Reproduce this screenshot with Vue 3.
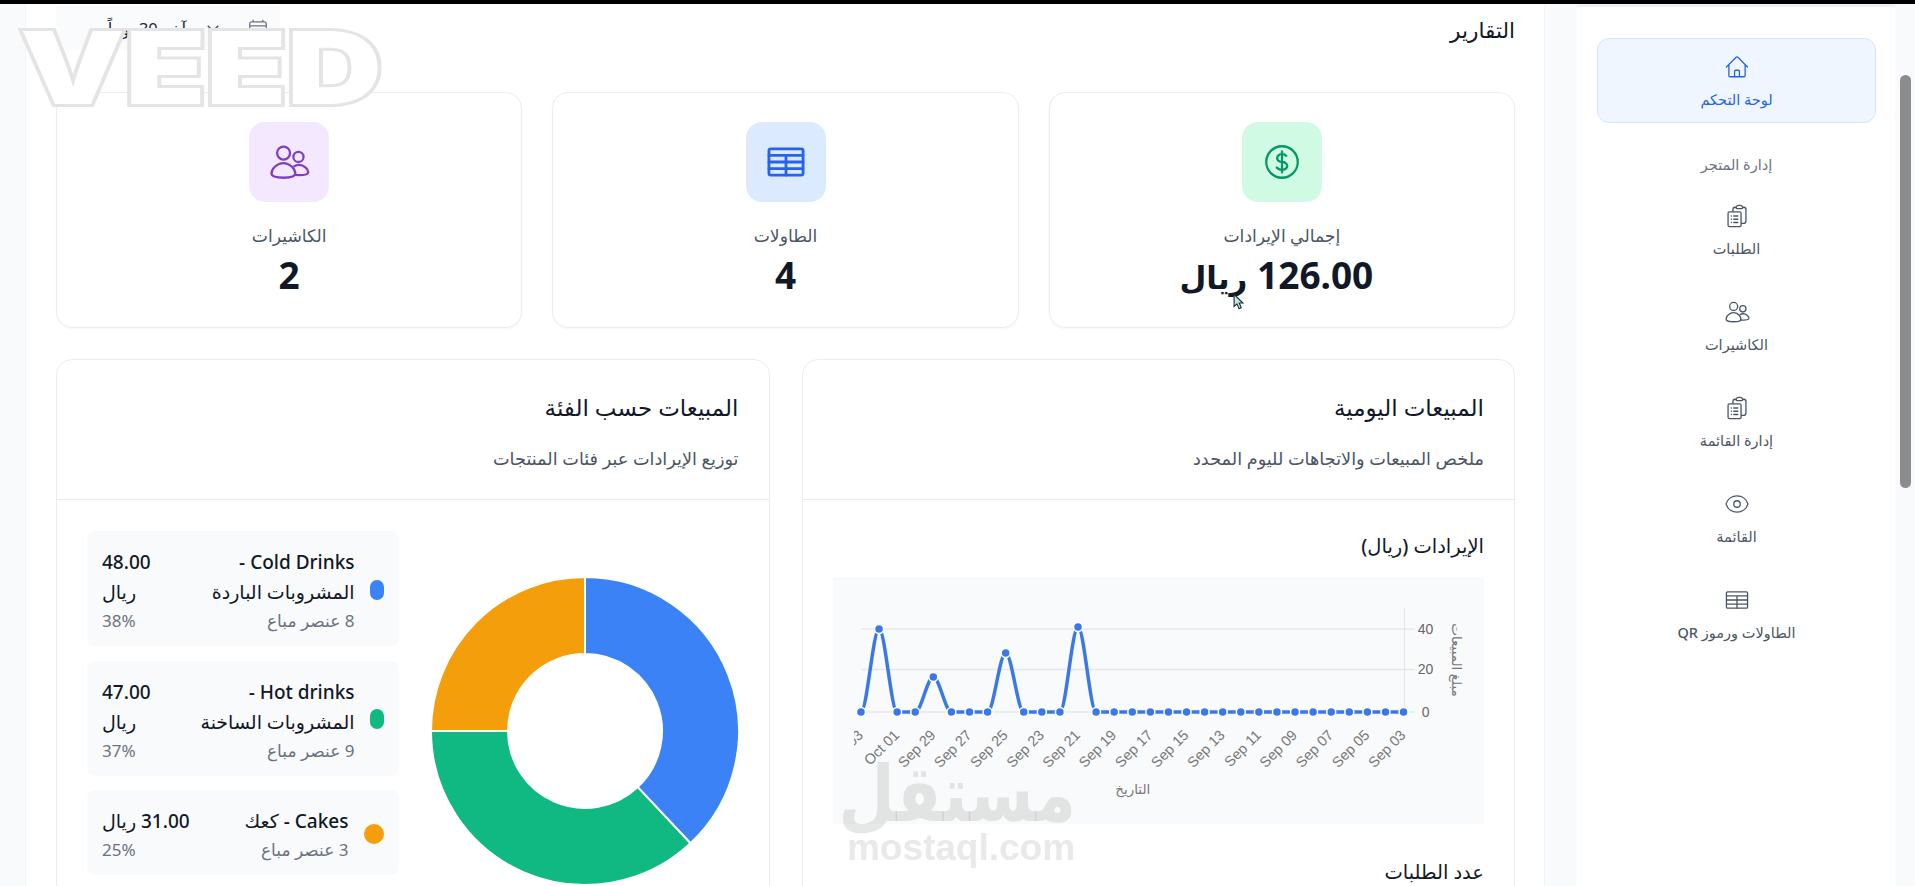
<script setup>
const stats = [
  { label: 'إجمالي الإيرادات', value: '126.00', unit: 'ريال', tone: 'green', icon: 'dollar' },
  { label: 'الطاولات', value: '4', tone: 'blue', icon: 'table' },
  { label: 'الكاشيرات', value: '2', tone: 'purple', icon: 'users' },
]

const navItems = [
  { label: 'الطلبات', icon: 'clip' },
  { label: 'الكاشيرات', icon: 'users' },
  { label: 'إدارة القائمة', icon: 'clip' },
  { label: 'القائمة', icon: 'eye' },
  { label: 'الطاولات ورموز QR', icon: 'table' },
]

const legend = [
  { name: 'Cold Drinks - المشروبات الباردة', sold: '8 عنصر مباع', value: '48.00 ريال', pct: '38%', color: '#3b82f6', narrow: true },
  { name: 'Hot drinks - المشروبات الساخنة', sold: '9 عنصر مباع', value: '47.00 ريال', pct: '37%', color: '#10b981', narrow: true },
  { name: 'Cakes - كعك', sold: '3 عنصر مباع', value: '31.00 ريال', pct: '25%', color: '#f59e0b', narrow: false },
]

// donut, clockwise from the top
const arc = (from, to) => {
  const R = 154, r = 77, c = 154
  const p = (rad, t) => {
    const a = t * Math.PI * 2
    return `${c + rad * Math.sin(a)} ${c - rad * Math.cos(a)}`
  }
  const big = to - from > 0.5 ? 1 : 0
  return `M${p(R, from)} A${R} ${R} 0 ${big} 1 ${p(R, to)} L${p(r, to)} A${r} ${r} 0 ${big} 0 ${p(r, from)} Z`
}
const slices = [
  { d: arc(0, 0.38), color: '#3b82f6' },
  { d: arc(0.38, 0.75), color: '#10b981' },
  { d: arc(0.75, 1), color: '#f59e0b' },
]

// revenue chart, in the coordinates of the grey box
const peaks = { 1: 52, 4: 100, 8: 76, 12: 50 }
const points = Array.from({ length: 31 }, (_, i) => ({ x: 28 + i * 18.1, y: peaks[i] ?? 135 }))
const linePath = points.reduce((d, p, i) => {
  if (i === 0) return `M${p.x} ${p.y}`
  const prev = points[i - 1]
  const k = (p.x - prev.x) / 3
  return `${d} C${prev.x + k} ${prev.y} ${p.x - k} ${p.y} ${p.x} ${p.y}`
}, '')
const dayLabels = ['Oct 03', 'Oct 01', 'Sep 29', 'Sep 27', 'Sep 25', 'Sep 23', 'Sep 21', 'Sep 19', 'Sep 17', 'Sep 15', 'Sep 13', 'Sep 11', 'Sep 09', 'Sep 07', 'Sep 05', 'Sep 03']
</script>

<template>
  <div class="page" dir="rtl">
    <div class="topbar"></div>
    <div class="shell">
      <aside class="sidebar">
        <div class="nav-item active">
          <svg class="nav-icon" viewBox="0 0 24 24"><path d="m2.25 12 8.954-8.955c.44-.439 1.152-.439 1.591 0L21.75 12M4.5 9.75v10.125c0 .621.504 1.125 1.125 1.125H9.75v-4.875c0-.621.504-1.125 1.125-1.125h2.25c.621 0 1.125.504 1.125 1.125V21h4.125c.621 0 1.125-.504 1.125-1.125V9.75M8.25 21h8.25"/></svg>
          <span>لوحة التحكم</span>
        </div>
        <div class="nav-group">إدارة المتجر</div>
        <div v-for="item in navItems" :key="item.label" class="nav-item">
          <svg class="nav-icon" viewBox="0 0 24 24">
            <template v-if="item.icon === 'clip'">
              <path d="M9 12h3.75M9 15h3.75M9 18h3.75m3 .75H18a2.25 2.25 0 0 0 2.25-2.25V6.108c0-1.135-.845-2.098-1.976-2.192a48.424 48.424 0 0 0-1.123-.08m-5.801 0c-.065.21-.1.433-.1.664 0 .414.336.75.75.75h4.5a.75.75 0 0 0 .75-.75 2.25 2.25 0 0 0-.1-.664m-5.8 0A2.251 2.251 0 0 1 13.5 2.25H15c1.012 0 1.867.668 2.15 1.586m-5.8 0c-.376.023-.75.05-1.124.08C9.095 4.01 8.25 4.973 8.25 6.108V8.25m0 0H4.875c-.621 0-1.125.504-1.125 1.125v11.25c0 .621.504 1.125 1.125 1.125h9.75c.621 0 1.125-.504 1.125-1.125V9.375c0-.621-.504-1.125-1.125-1.125H8.25ZM6.75 12h.008v.008H6.75V12Zm0 3h.008v.008H6.75V15Zm0 3h.008v.008H6.75V18Z"/>
            </template>
            <template v-else-if="item.icon === 'users'">
              <circle cx="8.900" cy="6.900" r="3.700"/><circle cx="17.400" cy="9.100" r="2.900"/>
              <path d="M8.800 12.600c3.600 0 6.800 3.300 6.800 6 0 1.600-3 2.400-6.800 2.400S2 20.200 2 18.600c0-2.700 3.200-6 6.800-6Z"/>
              <path d="M15 14.400c.8-.5 1.700-.8 2.700-.8 2.800 0 5.300 2.500 5.300 4.200 0 1.200-2.400 1.700-5.200 1.700-.9 0-1.700 0-2.400-.2"/>
            </template>
            <template v-else-if="item.icon === 'eye'">
              <path d="M2.036 12.322a1.012 1.012 0 0 1 0-.639C3.423 7.51 7.36 4.5 12 4.5c4.638 0 8.573 3.007 9.963 7.178.07.207.07.431 0 .639C20.577 16.49 16.64 19.5 12 19.5c-4.638 0-8.573-3.007-9.963-7.178Z"/>
              <path d="M15 12a3 3 0 1 1-6 0 3 3 0 0 1 6 0Z"/>
            </template>
            <template v-else>
              <rect x="2.250" y="4.500" width="19.500" height="15" rx="1.100"/>
              <path d="M2.250 8.250h19.500M2.250 12h19.500M2.250 15.750h19.500M12 8.250V19.500"/>
            </template>
          </svg>
          <span>{{ item.label }}</span>
        </div>
      </aside>

      <main class="main">
        <header class="main-head">
          <h1>التقارير</h1>
          <div class="range">
            <svg class="range-icon" viewBox="0 0 24 24"><path d="M6.750 3v2.250M17.250 3v2.250M3 18.750V7.500a2.250 2.250 0 0 1 2.250-2.250h13.500A2.250 2.250 0 0 1 21 7.500v11.250M3 18.750A2.250 2.250 0 0 0 5.250 21h13.500A2.250 2.250 0 0 0 21 18.750M3 9.750h18"/></svg>
            <svg class="range-chev" viewBox="0 0 24 24"><path d="m5 9 7 7 7-7"/></svg>
            <span>آخر 30 يوماً</span>
          </div>
        </header>

        <section class="stats">
          <div v-for="s in stats" :key="s.label" class="stat">
            <div class="stat-icon" :class="s.tone">
              <svg viewBox="0 0 24 24">
                <path v-if="s.icon === 'dollar'" d="M12 6v12m-3-2.818.879.659c1.171.879 3.07.879 4.242 0 1.172-.879 1.172-2.303 0-3.182C13.536 12.219 12.768 12 12 12c-.725 0-1.450-.22-2.003-.659-1.106-.879-1.106-2.303 0-3.182s2.900-.879 4.006 0l.415.330M21 12a9 9 0 1 1-18 0 9 9 0 0 1 18 0Z"/>
                <template v-else-if="s.icon === 'table'">
                  <rect x="2.250" y="4.500" width="19.500" height="15" rx="1.100"/>
                  <path d="M2.250 8.250h19.500M2.250 12h19.500M2.250 15.750h19.500M12 8.250V19.500"/>
                </template>
                <template v-else>
                  <circle cx="8.900" cy="6.900" r="3.700"/><circle cx="17.400" cy="9.100" r="2.900"/>
                  <path d="M8.800 12.600c3.600 0 6.800 3.300 6.800 6 0 1.600-3 2.400-6.800 2.400S2 20.200 2 18.600c0-2.700 3.200-6 6.800-6Z"/>
                  <path d="M15 14.400c.8-.5 1.700-.8 2.700-.8 2.800 0 5.300 2.500 5.300 4.200 0 1.200-2.400 1.700-5.200 1.700-.9 0-1.700 0-2.400-.2"/>
                </template>
              </svg>
            </div>
            <div class="stat-label">{{ s.label }}</div>
            <div class="stat-value" :class="{ 'has-unit': s.unit }">{{ s.value }} <span v-if="s.unit" class="stat-unit">{{ s.unit }}</span></div>
          </div>
        </section>

        <section class="panels">
          <div class="panel">
            <div class="panel-head">
              <h2>المبيعات اليومية</h2>
              <p>ملخص المبيعات والاتجاهات لليوم المحدد</p>
            </div>
            <div class="panel-body chart-body">
              <h3>الإيرادات (ريال)</h3>
              <div class="chart-box">
                <svg class="chart" viewBox="0 0 652 247" direction="ltr">
                  <defs><clipPath id="plotClip"><rect x="21" y="0" width="631" height="247"/></clipPath></defs>
                  <path class="grid" d="M28 52H582M28 92.500H582M28 135H582"/>
                  <path class="axis" d="M572 31V135"/>
                  <text class="tick" x="593" y="57" text-anchor="middle">40</text>
                  <text class="tick" x="593" y="97" text-anchor="middle">20</text>
                  <text class="tick" x="593" y="140" text-anchor="middle">0</text>
                  <text class="axis-title" transform="translate(619 83) rotate(90)" text-anchor="middle">مبلغ المبيعات</text>
                  <path class="line" :d="linePath"/>
                  <circle v-for="(p, i) in points" :key="i" class="dot" :cx="p.x" :cy="p.y" r="4.500"/>
                  <g clip-path="url(#plotClip)">
                    <text v-for="(d, i) in dayLabels" :key="d" class="day" text-anchor="end" :transform="`translate(${31 + i * 36.200} 159) rotate(-45)`">{{ d }}</text>
                  </g>
                  <text class="axis-title" x="300" y="217" text-anchor="middle">التاريخ</text>
                </svg>
              </div>
              <h3 class="orders-title">عدد الطلبات</h3>
            </div>
          </div>

          <div class="panel">
            <div class="panel-head">
              <h2>المبيعات حسب الفئة</h2>
              <p>توزيع الإيرادات عبر فئات المنتجات</p>
            </div>
            <div class="panel-body pie-body">
              <svg class="pie" viewBox="0 0 308 308">
                <path v-for="s in slices" :key="s.color" :d="s.d" :fill="s.color" stroke="#fff" stroke-width="2"/>
              </svg>
              <div class="legend">
                <div v-for="row in legend" :key="row.name" class="legend-row">
                  <span class="swatch" :class="{ narrow: row.narrow }" :style="{ background: row.color }"></span>
                  <div class="legend-name" :class="{ narrow: row.narrow }">
                    <div class="strong">{{ row.name }}</div>
                    <div class="muted">{{ row.sold }}</div>
                  </div>
                  <div class="legend-value" :class="{ narrow: row.narrow }">
                    <div class="strong">{{ row.value }}</div>
                    <div class="muted">{{ row.pct }}</div>
                  </div>
                </div>
              </div>
            </div>
          </div>
        </section>
      </main>
    </div>

    <div class="thumb"></div>
    <svg class="cursor" viewBox="0 0 10 15"><path d="M1 1v11l2.600-2.400L5.500 14l2-.9L5.700 8.900H9Z"/></svg>
    <div class="mark-veed" dir="ltr">VEED</div>
    <div class="mark-mostaql">
      <div class="mark-ar">مستقل</div>
      <div class="mark-en" dir="ltr">mostaql.com</div>
    </div>
  </div>
</template>

<style>
html, body {
  margin: 0;
  overflow: hidden;
}
</style>

<style scoped>
.page {
  position: relative;
  width: 1915px;
  height: 886px;
  overflow: hidden;
  background: #f8fafc;
  font-family: "Noto Sans", "DejaVu Sans", sans-serif;
  color: #111827;
}
.topbar {
  height: 4px;
  background: #000;
}
.shell {
  display: flex;
  gap: 32px;
  padding-right: 20px;
  padding-left: 25px;
  height: 882px;
}
.sidebar {
  width: 318px;
  flex: none;
  box-sizing: border-box;
  background: #fff;
  padding: 31px 19px 0 20px;
  border-top: 3px solid #eef2f7;
}
.nav-item {
  display: flex;
  flex-direction: column;
  align-items: center;
  height: 96px;
  font-size: 14.500px;
  font-weight: 500;
  color: #4b5563;
  line-height: 20px;
}
.nav-item.active {
  height: 85px;
  box-sizing: border-box;
  padding-top: 15px;
  color: #2563eb;
  background: #eff6ff;
  border: 1px solid #d3e4fb;
  border-radius: 12px;
  margin-bottom: 31px;
}
.nav-icon {
  width: 26px;
  height: 26px;
  margin-bottom: 9px;
  fill: none;
  stroke: currentColor;
  stroke-width: 1.2;
  stroke-linecap: round;
  stroke-linejoin: round;
}
.nav-group {
  height: 20px;
  line-height: 20px;
  text-align: center;
  font-size: 14.500px;
  color: #6b7280;
  margin-bottom: 29px;
}
.main {
  flex: 1;
  min-width: 0;
  box-sizing: border-box;
  padding: 0 29px 0 30px;
  background: #fff;
  border-inline: 1px solid #f1f5f9;
}
.main-head {
  display: flex;
  justify-content: space-between;
  align-items: center;
  height: 48px;
  margin-bottom: 40px;
}
.main-head h1 {
  margin: 4px 0 0;
  font-size: 21.600px;
  font-weight: 500;
  line-height: 30px;
}
.range {
  display: flex;
  align-items: center;
  width: 224px;
  height: 44px;
  box-sizing: border-box;
  padding: 0 11px;
  background: #fafbfc;
  font-size: 16.500px;
  color: #1f2937;
}
.range-icon {
  width: 22px;
  height: 22px;
  fill: none;
  stroke: #6b7280;
  stroke-width: 1.400;
}
.range-chev {
  width: 18px;
  height: 18px;
  margin: 0 25px 0 18px;
  fill: none;
  stroke: #4b5563;
  stroke-width: 2;
}
.stats {
  display: grid;
  grid-template-columns: repeat(3, 1fr);
  gap: 30px;
  margin-bottom: 31px;
}
.stat {
  height: 236px;
  box-sizing: border-box;
  display: flex;
  flex-direction: column;
  align-items: center;
  padding-top: 29px;
  border: 1px solid #eaecef;
  border-radius: 16px;
  box-shadow: 0 1px 2px rgba(0, 0, 0, 0.04);
}
.stat-icon {
  width: 80px;
  height: 80px;
  border-radius: 16px;
  display: flex;
  align-items: center;
  justify-content: center;
}
.stat-icon svg {
  width: 42px;
  height: 42px;
  fill: none;
  stroke-width: 1.300;
  stroke-linecap: round;
  stroke-linejoin: round;
}
.stat-icon.green { background: #d1fae5; }
.stat-icon.green svg { stroke: #059669; }
.stat-icon.blue { background: #dbeafe; }
.stat-icon.blue svg { stroke: #2563eb; stroke-width: 1.600; }
.stat-icon.purple { background: #f3e8ff; }
.stat-icon.purple svg { stroke: #7e3fc4; }
.stat-label {
  margin-top: 22px;
  font-size: 17.200px;
  line-height: 24px;
  color: #4b5563;
}
.stat-value {
  margin-top: 7px;
  font-size: 37px;
  line-height: 40px;
  font-weight: 700;
  color: #111827;
}
.stat-value.has-unit {
  margin-right: 11px;
}
.stat-unit {
  font-size: 31px;
}
.panels {
  display: grid;
  grid-template-columns: 1fr 1fr;
  gap: 32px;
}
.panel {
  border: 1px solid #eaecef;
  border-radius: 16px;
  height: 620px;
  box-sizing: border-box;
}
.panel-head {
  height: 140px;
  box-sizing: border-box;
  padding: 31px 30px 0;
  border-bottom: 1px solid #e8eaed;
}
.panel-head h2 {
  margin: 0;
  font-size: 23px;
  font-weight: 500;
  line-height: 32px;
}
.panel-head p {
  margin: 23px 0 0;
  font-size: 17.700px;
  line-height: 24px;
  color: #4b5563;
}
.panel-body {
  padding: 31px 30px;
}
.chart-body h3 {
  margin: -1px 0 0;
  font-size: 19.500px;
  font-weight: 500;
  line-height: 32px;
  color: #111827;
}
.chart-box {
  margin-top: 15px;
  height: 247px;
  background: #f9fafb;
}
.chart {
  display: block;
  width: 100%;
  height: 100%;
}
.chart-body .orders-title {
  margin-top: 32px;
}
.grid {
  fill: none;
  stroke: #e5e7eb;
  stroke-width: 1.500;
}
.axis {
  fill: none;
  stroke: #dfe2e6;
}
.tick {
  font-family: "Liberation Sans", sans-serif;
  font-size: 14px;
  fill: #666;
}
.axis-title {
  font-size: 13.500px;
  fill: #777;
}
.day {
  font-family: "Liberation Sans", sans-serif;
  font-size: 14.500px;
  fill: #777;
}
.line {
  fill: none;
  stroke: #3b78e7;
  stroke-width: 3.500;
}
.dot {
  fill: #3b78e7;
  stroke: #fff;
  stroke-width: 1.500;
}
.pie-body {
  display: flex;
  gap: 32px;
  align-items: flex-start;
}
.pie {
  width: 308px;
  height: 308px;
  flex: none;
  margin-top: 46px;
}
.legend {
  flex: 1;
  display: flex;
  flex-direction: column;
  gap: 14.500px;
}
.legend-row {
  display: flex;
  align-items: center;
  gap: 15px;
  padding: 16px 15px 14px;
  background: #f9fafb;
  border-radius: 8px;
}
.swatch {
  width: 20px;
  height: 20px;
  border-radius: 50%;
  flex: none;
}
.swatch.narrow {
  width: 14px;
  border-radius: 7px;
}
.legend-name {
  flex: 1;
  min-width: 0;
}
.legend-name.narrow {
  max-width: 168px;
}
.legend-value {
  flex: none;
  margin-inline-start: auto;
  text-align: left;
}
.legend-value.narrow {
  width: 52px;
}
.strong {
  font-size: 19px;
  line-height: 30px;
  font-weight: 500;
  color: #111827;
}
.muted {
  margin-top: 3px;
  font-size: 17px;
  line-height: 22px;
  color: #6b7280;
}
.thumb {
  position: absolute;
  left: 1900px;
  top: 75px;
  width: 11px;
  height: 413px;
  border-radius: 6px;
  background: #8c8c8c;
}
.cursor {
  position: absolute;
  left: 1233px;
  top: 293px;
  width: 11px;
  height: 17px;
  fill: #b6f0d8;
  stroke: #1f2937;
  stroke-width: 1;
}
.mark-veed {
  position: absolute;
  left: 20px;
  top: 18px;
  font-family: "Inter", "Liberation Sans", sans-serif;
  font-size: 100px;
  line-height: 100px;
  font-weight: 900;
  color: #fff;
  -webkit-text-stroke: 6px #e4e4e4;
  paint-order: stroke fill;
  white-space: nowrap;
  transform: scaleX(1.320);
  transform-origin: left center;
}
.mark-mostaql {
  position: absolute;
  left: 846px;
  top: 752px;
  width: 230px;
  text-align: center;
  color: rgba(120, 120, 120, 0.18);
  font-weight: 700;
}
.mark-ar {
  font-size: 65px;
  line-height: 78px;
  transform: scaleY(1.200);
}
.mark-en {
  font-size: 37px;
  line-height: 36px;
  font-family: "Liberation Sans", sans-serif;
}
</style>
